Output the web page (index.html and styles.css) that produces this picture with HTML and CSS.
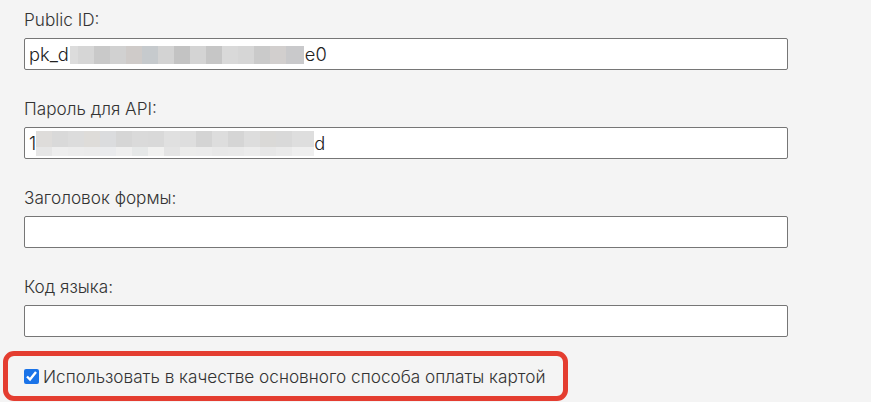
FILE: index.html
```html
<!DOCTYPE html>
<html lang="ru">
<head>
<meta charset="utf-8">
<title>Настройки</title>
<link rel="stylesheet" href="styles.css">
</head>
<body>
<div class="form">
  <div class="group">
    <label class="label">Public ID:</label>
    <div class="field"><span class="val">pk_d</span><span class="blur blur-one"></span><span class="val">e0</span></div>
  </div>
  <div class="group">
    <label class="label">Пароль для API:</label>
    <div class="field"><span class="val">1</span><span class="blur blur-two"></span><span class="val">d</span></div>
  </div>
  <div class="group">
    <label class="label">Заголовок формы:</label>
    <div class="field"></div>
  </div>
  <div class="group">
    <label class="label">Код языка:</label>
    <div class="field"></div>
  </div>
</div>
<div class="highlight">
  <label class="check"><input type="checkbox" checked><span>Использовать в качестве основного способа оплаты картой</span></label>
</div>
</body>
</html>
```

FILE: styles.css
```css
html, body {
  margin: 0;
  padding: 0;
  background: #f4f4f4;
}
body {
  font-family: Inter, "Noto Sans", sans-serif;
  font-size: 17px;
  color: #333333;
}
.form {
  padding: 10px 0 0 24px;
  width: 764px;
}
.group {
  display: flex;
  flex-direction: column;
  margin-bottom: 29px;
}
.group:last-child {
  margin-bottom: 0;
}
.label {
  line-height: 20px;
  height: 20px;
  margin-bottom: 8px;
  font-size: 17.2px;
  font-weight: 300;
  color: #333333;
}
.field {
  box-sizing: border-box;
  height: 32px;
  border: 1px solid #767676;
  border-radius: 2px;
  background: #ffffff;
  display: flex;
  align-items: center;
  padding-left: 4px;
  color: #222222;
  font-size: 18.3px;
  font-weight: 300;
}
.val {
  line-height: 20px;
}
.blur {
  display: inline-block;
}
.blur-one {
  width: 234px;
  height: 18px;
  margin: 1px 1px 0 1px;
  background: linear-gradient(to right,
    #dcdcdc 0 8px, #d6d6d6 8px 24px, #c9c9c9 24px 40px, #d1d1d1 40px 56px,
    #cfcbc9 56px 72px, #c6cacd 72px 88px, #d3d3d3 88px 104px, #c3c3c3 104px 120px,
    #d4d4d4 120px 136px, #c6c6c6 136px 152px, #d9d9d9 152px 168px, #d6d6d6 168px 184px,
    #cacaca 184px 200px, #d2cfce 200px 216px, #c9c9cb 216px 234px);
}
.blur-two {
  width: 278px;
  height: 25px;
  margin-top: 1px;
  background:
    linear-gradient(to right,
      #dedcda 0 16px, #d9d9d9 16px 32px, #dcdcdc 32px 48px, #dedcd9 48px 64px,
      #dbdcde 64px 80px, #d6d6d6 80px 96px, #dadada 96px 112px, #d9d9d9 112px 128px,
      #e0e0e0 128px 144px, #dedede 144px 160px, #d4d4d4 160px 176px, #dddddd 176px 192px,
      #d5d5d5 192px 208px, #dddddd 208px 224px, #dad9d7 224px 240px, #d9d9d9 240px 256px,
      #dedede 256px 278px) top / 100% 16px no-repeat,
    linear-gradient(to right,
      #e6e6e6 0 16px, #eeeeee 16px 32px, #ececec 32px 48px, #ebebeb 48px 64px,
      #eaebed 64px 80px, #efefef 80px 96px, #e6e8e8 96px 112px, #f1f1f0 112px 128px,
      #e4e4e4 128px 144px, #ececeb 144px 160px, #ebebeb 160px 176px, #e8e8e8 176px 192px,
      #e9e9e9 192px 208px, #ececec 208px 224px, #e7e7e7 224px 240px, #eaeaea 240px 256px,
      #efefef 256px 278px) bottom / 100% 9px no-repeat;
}
.highlight {
  box-sizing: border-box;
  margin: 14px 0 0 3px;
  width: 565px;
  height: 50px;
  border: 5px solid #e43d30;
  border-radius: 11px;
  display: flex;
  align-items: center;
  padding-left: 16px;
}
.check {
  display: flex;
  align-items: center;
  gap: 4px;
  font-size: 17.2px;
  font-weight: 300;
  color: #333333;
}
.check input {
  margin: 0;
  width: 15px;
  height: 15px;
  accent-color: #1a73e8;
}
```
